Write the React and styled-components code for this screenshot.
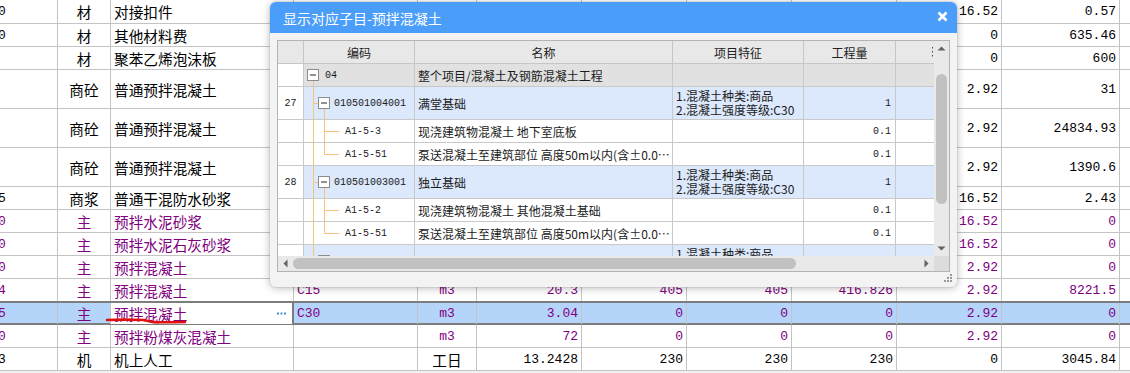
import React from 'react';
import styled, { createGlobalStyle, css } from 'styled-components';

const GlobalStyle = createGlobalStyle`
  html, body { margin: 0; padding: 0; background: #fff; overflow: hidden; }
  body { font-family: "Liberation Mono", "Noto Sans CJK SC", monospace; }
`;

const MIX = '"Liberation Mono", "Noto Sans CJK SC", monospace';
const CJK = '"Noto Sans CJK SC", sans-serif';
const PURPLE = '#800080';
const LINE = '#c4c4c4';
const ORANGE = '#f8c27c';

const COLS = '58px 53px 183px 124px 59px 105px 105px 105px 105px 105px 118px 1fr';

const Page = styled.div`
  position: relative;
  width: 1130px;
  height: 373px;
  overflow: hidden;
  background: #f0f0f0;
`;

const Sheet = styled.div`
  background: #fff;
`;

const Row = styled.div`
  display: grid;
  grid-template-columns: ${COLS};
  height: ${(p) => p.$h}px;
  box-sizing: border-box;
  border-bottom: 1px solid ${LINE};
  background: #fff;
  color: ${(p) => (p.$purple ? PURPLE : '#000')};
  ${(p) =>
    p.$selected &&
    css`
      background: #b4d4fa;
      border-top: 2px solid #7d7d7d;
      border-bottom: 2px solid #7d7d7d;
      margin-top: -1px;
    `}
`;

const Cell = styled.div`
  position: relative;
  box-sizing: border-box;
  border-right: ${(p) => (p.$edit ? '2px solid #7d7d7d' : `1px solid ${LINE}`)};
  display: flex;
  align-items: center;
  justify-content: ${(p) =>
    p.$align === 'right' ? 'flex-end' : p.$align === 'center' ? 'center' : p.$align === 'between' ? 'space-between' : 'flex-start'};
  padding: ${(p) => (p.$clip ? '0' : p.$align === 'between' ? '0 6px 0 3px' : '0 3px')};
  overflow: ${(p) => (p.$edit ? 'visible' : 'hidden')};
  white-space: nowrap;
  font-size: ${(p) => (p.$cjk ? '14.67px' : '13px')};
  font-family: ${(p) => (p.$cjk ? CJK : MIX)};
  background: ${(p) => (p.$edit ? '#fff' : 'transparent')};
  &:last-child { border-right: none; }
`;

const Clipped = styled.span`
  margin-left: -2px;
`;

const EditDots = styled.svg`
  flex: none;
  display: block;
`;

const Annotation = styled.svg`
  position: absolute;
  left: 104px;
  top: 315px;
  pointer-events: none;
`;

/* ---------------- Dialog ---------------- */

const Dialog = styled.div`
  position: absolute;
  left: 270px;
  top: 2px;
  width: 687px;
  height: 285px;
  box-sizing: border-box;
  background: #f3f3f3;
  border-radius: 6px;
  box-shadow: 0 1px 9px rgba(0, 0, 0, 0.28), 0 0 0 1px rgba(0, 0, 0, 0.06);
  display: flex;
  flex-direction: column;
  overflow: hidden;
`;

const TitleBar = styled.div`
  height: 31px;
  flex: none;
  background: #4a9df8;
  display: flex;
  align-items: center;
  justify-content: space-between;
  padding: 0 9px 0 13px;
  color: #fff;
  font-family: ${CJK};
  font-size: 14px;
`;

const CloseIcon = styled.svg`
  display: block;
  margin-top: -3px;
`;

const DialogBody = styled.div`
  position: relative;
  flex: 1;
  padding: 7px 7px 0 7px;
`;

const GridFrame = styled.div`
  width: 673px;
  height: 232px;
  box-sizing: border-box;
  border: 1px solid #b3b3b3;
  display: grid;
  grid-template-columns: 1fr 15px;
  grid-template-rows: 1fr 15px;
  background: #fff;
`;

const Viewport = styled.div`
  overflow: hidden;
  position: relative;
`;

const DCOLS = '26px 111px 258px 131px 92px 38px';

const DRow = styled.div`
  display: grid;
  grid-template-columns: ${DCOLS};
  height: ${(p) => p.$h}px;
`;

const DHead = styled.div`
  box-sizing: border-box;
  border-right: 1px solid #c6c6c6;
  border-bottom: 1px solid #c6c6c6;
  background: #e8e8e8;
  display: flex;
  align-items: center;
  justify-content: ${(p) => (p.$end ? 'flex-end' : 'center')};
  font-family: ${CJK};
  font-size: 12px;
  color: #222;
  &:last-child { border-right: none; }
`;

const DCell = styled.div`
  box-sizing: border-box;
  border-right: 1px solid #c9c9c9;
  border-bottom: 1px solid #c9c9c9;
  background: ${(p) => p.$bg || '#fff'};
  display: flex;
  align-items: ${(p) => (p.$tree ? 'stretch' : 'center')};
  justify-content: ${(p) => (p.$align === 'right' ? 'flex-end' : p.$align === 'center' ? 'center' : 'flex-start')};
  padding: ${(p) => (p.$tree ? '0' : p.$align === 'right' ? '0 4px 0 3px' : '0 3px')};
  overflow: hidden;
  white-space: nowrap;
  font-family: ${(p) => (p.$text ? CJK : MIX)};
  font-size: ${(p) => p.$fs || 12}px;
  color: #1b1b1b;
  &:last-child { border-right: none; }
`;

const CodeText = styled.span`
  align-self: center;
  font-size: 10px;
`;

const FeatureLines = styled.div`
  display: flex;
  flex-direction: column;
  font-family: ${CJK};
  font-size: 12px;
  line-height: 14px;
`;

const FeatureLine = styled.span`
  display: block;
  height: 14px;
`;

const TreeSvg = styled.svg`
  flex: none;
  display: block;
`;

const VScroll = styled.div`
  background: #e9e9e9;
  display: flex;
  flex-direction: column;
`;

const HScroll = styled.div`
  background: #e9e9e9;
  display: flex;
  flex-direction: row;
`;

const ArrowBox = styled.div`
  flex: none;
  width: 15px;
  height: 15px;
  display: flex;
  align-items: center;
  justify-content: center;
`;

const VTrack = styled.div`
  flex: 1;
  padding-top: 18px;
  display: flex;
  justify-content: center;
`;

const VThumb = styled.div`
  width: 11px;
  height: 130px;
  border-radius: 6px;
  background: #c1c1c1;
`;

const HTrack = styled.div`
  flex: 1;
  display: flex;
  align-items: center;
`;

const HThumb = styled.div`
  width: 503px;
  height: 11px;
  border-radius: 6px;
  background: #c1c1c1;
`;

const Corner = styled.div`
  background: #dcdcdc;
`;

const Grip = styled.svg`
  position: absolute;
  right: 4px;
  bottom: 4px;
  display: block;
`;

/* ---------------- Data ---------------- */

const bgRows = [
  { h: 24, c0: '0', type: '材', name: '对接扣件', price: '16.52', total: '0.57' },
  { h: 23, c0: '0', type: '材', name: '其他材料费', price: '0', total: '635.46' },
  { h: 23, c0: '', type: '材', name: '聚苯乙烯泡沫板', price: '0', total: '600' },
  { h: 39, type: '商砼', name: '普通预拌混凝土', price: '2.92', total: '31' },
  { h: 39, type: '商砼', name: '普通预拌混凝土', price: '2.92', total: '24834.93' },
  { h: 39, type: '商砼', name: '普通预拌混凝土', price: '2.92', total: '1390.6' },
  { h: 23, c0: '5', type: '商浆', name: '普通干混防水砂浆', price: '16.52', total: '2.43' },
  { h: 23, c0: '0', type: '主', name: '预拌水泥砂浆', price: '16.52', total: '0', purple: true },
  { h: 23, c0: '0', type: '主', name: '预拌水泥石灰砂浆', price: '16.52', total: '0', purple: true },
  { h: 23, c0: '0', type: '主', name: '预拌混凝土', price: '2.92', total: '0', purple: true },
  { h: 23, c0: '4', type: '主', name: '预拌混凝土', spec: 'C15', unit: 'm3', qty: '20.3', a: '405', b: '405', c: '416.826', price: '2.92', total: '8221.5', purple: true },
  { h: 24, c0: '5', type: '主', name: '预拌混凝土', spec: 'C30', unit: 'm3', qty: '3.04', a: '0', b: '0', c: '0', price: '2.92', total: '0', purple: true, selected: true },
  { h: 23, c0: '0', type: '主', name: '预拌粉煤灰混凝土', spec: '', unit: 'm3', qty: '72', a: '0', b: '0', c: '0', price: '2.92', total: '0', purple: true },
  { h: 23, c0: '3', type: '机', name: '机上人工', spec: '', unit: '工日', qty: '13.2428', a: '230', b: '230', c: '230', price: '0', total: '3045.84' },
];

const FEAT = ['1.混凝土种类:商品', '2.混凝土强度等级:C30'];
const BLUE_ROW = '#dce8fb';
const GREY_ROW = '#e1e1e1';

const dRows = [
  { kind: 'root', num: '', code: '04', name: '整个项目/混凝土及钢筋混凝土工程', h: 23, bg: GREY_ROW },
  { kind: 'parent', num: '27', code: '010501004001', name: '满堂基础', feat: FEAT, qty: '1', h: 33, bg: BLUE_ROW },
  { kind: 'child', code: 'A1-5-3', name: '现浇建筑物混凝土 地下室底板', qty: '0.1', h: 23 },
  { kind: 'last', code: 'A1-5-51', name: '泵送混凝土至建筑部位 高度50m以内(含±0.0…', qty: '0.1', h: 23 },
  { kind: 'parent', num: '28', code: '010501003001', name: '独立基础', feat: FEAT, qty: '1', h: 33, bg: BLUE_ROW },
  { kind: 'child', code: 'A1-5-2', name: '现浇建筑物混凝土 其他混凝土基础', qty: '0.1', h: 23 },
  { kind: 'last', code: 'A1-5-51', name: '泵送混凝土至建筑部位 高度50m以内(含±0.0…', qty: '0.1', h: 23 },
  { kind: 'parent', num: '29', code: '010501001001', name: '垫层', feat: FEAT, qty: '1', h: 33, bg: BLUE_ROW },
];

/* ---------------- Pieces ---------------- */

function ExpandBox({ x, y }) {
  return (
    <g>
      <rect x={x + 0.5} y={y + 0.5} width={11} height={11} fill="#fff" stroke="#8c8c8c" />
      <line x1={x + 3} y1={y + 6} x2={x + 9} y2={y + 6} stroke="#222" strokeWidth="1" />
    </g>
  );
}

function Tree({ kind, h }) {
  const ch = h - 1;
  const mid = Math.floor(ch / 2);
  if (kind === 'root') {
    return (
      <TreeSvg width={21} height={ch}>
        <line x1={9.5} y1={mid + 6} x2={9.5} y2={ch} stroke={ORANGE} />
        <ExpandBox x={3} y={mid - 6} />
      </TreeSvg>
    );
  }
  if (kind === 'parent') {
    return (
      <TreeSvg width={30} height={ch}>
        <line x1={9.5} y1={0} x2={9.5} y2={ch} stroke={ORANGE} />
        <line x1={9.5} y1={mid + 0.5} x2={14} y2={mid + 0.5} stroke={ORANGE} />
        <line x1={20.5} y1={mid + 6} x2={20.5} y2={ch} stroke={ORANGE} />
        <ExpandBox x={14} y={mid - 6} />
      </TreeSvg>
    );
  }
  const last = kind === 'last';
  return (
    <TreeSvg width={41} height={ch}>
      <line x1={9.5} y1={0} x2={9.5} y2={ch} stroke={ORANGE} />
      <line x1={20.5} y1={0} x2={20.5} y2={last ? mid + 0.5 : ch} stroke={ORANGE} />
      <line x1={20.5} y1={mid + 0.5} x2={35} y2={mid + 0.5} stroke={ORANGE} />
    </TreeSvg>
  );
}

function Triangle({ dir }) {
  const pts = {
    up: '0.5,4.5 4.5,0.5 8.5,4.5',
    down: '0.5,0.5 4.5,4.5 8.5,0.5',
    left: '4.5,0.5 0.5,4.5 4.5,8.5',
    right: '0.5,0.5 4.5,4.5 0.5,8.5',
  }[dir];
  const vertical = dir === 'up' || dir === 'down';
  return (
    <svg width={vertical ? 9 : 5} height={vertical ? 5 : 9}>
      <polygon points={pts} fill="#636363" />
    </svg>
  );
}

function MenuDots() {
  return (
    <svg width="3" height="12" style={{ display: 'block' }}>
      <rect x="1" y="1" width="1" height="1.5" fill="#444" />
      <rect x="1" y="5" width="1" height="1.5" fill="#444" />
      <rect x="1" y="9" width="1" height="1.5" fill="#444" />
    </svg>
  );
}

function BgRow({ r }) {
  const num = (v) => <Cell $align="right">{v || ''}</Cell>;
  return (
    <Row $h={r.h} $purple={r.purple} $selected={r.selected}>
      <Cell $clip>{r.c0 ? <Clipped>{r.c0}</Clipped> : null}</Cell>
      <Cell $cjk $align="center">{r.type}</Cell>
      {r.selected ? (
        <Cell $cjk $align="between" $edit>
          <span>{r.name}</span>
          <EditDots width="9" height="3">
            <rect x="0" y="0.5" width="2" height="2" fill="#4b8fd0" />
            <rect x="3.5" y="0.5" width="2" height="2" fill="#4b8fd0" />
            <rect x="7" y="0.5" width="2" height="2" fill="#4b8fd0" />
          </EditDots>
        </Cell>
      ) : (
        <Cell $cjk>{r.name}</Cell>
      )}
      <Cell>{r.spec || ''}</Cell>
      <Cell $cjk={r.unit === '工日'} $align="center">{r.unit || ''}</Cell>
      {num(r.qty)}
      {num(r.a)}
      {num(r.b)}
      {num(r.c)}
      {num(r.price)}
      {num(r.total)}
      <Cell />
    </Row>
  );
}

function DialogRow({ r }) {
  return (
    <DRow $h={r.h}>
      <DCell $align="center" $fs={10}>{r.num || ''}</DCell>
      <DCell $bg={r.bg} $tree>
        <Tree kind={r.kind} h={r.h} />
        <CodeText>{r.code}</CodeText>
      </DCell>
      <DCell $bg={r.bg} $text>{r.name}</DCell>
      <DCell $bg={r.bg}>
        {r.feat ? (
          <FeatureLines>
            {r.feat.map((l) => (
              <FeatureLine key={l}>{l}</FeatureLine>
            ))}
          </FeatureLines>
        ) : null}
      </DCell>
      <DCell $bg={r.bg} $align="right" $fs={10}>{r.qty || ''}</DCell>
      <DCell $bg={r.bg} />
    </DRow>
  );
}

export default function App() {
  return (
    <>
      <GlobalStyle />
      <Page>
        <Sheet>
          {bgRows.map((r, i) => (
            <BgRow key={i} r={r} />
          ))}
        </Sheet>

        <Annotation width="84" height="12">
          <path
            d="M3 5 Q20 4.2 40 5 L46 6.5 Q50 7.5 56 7.3 Q70 7.2 81 7"
            fill="none"
            stroke="#e01010"
            strokeWidth="2.6"
            strokeLinecap="round"
          />
        </Annotation>

        <Dialog>
          <TitleBar>
            <span>显示对应子目-预拌混凝土</span>
            <CloseIcon width="11" height="11">
              <line x1="1.5" y1="1.5" x2="9.5" y2="9.5" stroke="#fff" strokeWidth="2.6" />
              <line x1="9.5" y1="1.5" x2="1.5" y2="9.5" stroke="#fff" strokeWidth="2.6" />
            </CloseIcon>
          </TitleBar>
          <DialogBody>
            <GridFrame>
              <Viewport>
                <DRow $h={23}>
                  <DHead />
                  <DHead>编码</DHead>
                  <DHead>名称</DHead>
                  <DHead>项目特征</DHead>
                  <DHead>工程量</DHead>
                  <DHead $end>
                    <MenuDots />
                  </DHead>
                </DRow>
                {dRows.map((r, i) => (
                  <DialogRow key={i} r={r} />
                ))}
              </Viewport>
              <VScroll>
                <ArrowBox>
                  <Triangle dir="up" />
                </ArrowBox>
                <VTrack>
                  <VThumb />
                </VTrack>
                <ArrowBox>
                  <Triangle dir="down" />
                </ArrowBox>
              </VScroll>
              <HScroll>
                <ArrowBox>
                  <Triangle dir="left" />
                </ArrowBox>
                <HTrack>
                  <HThumb />
                </HTrack>
                <ArrowBox>
                  <Triangle dir="right" />
                </ArrowBox>
              </HScroll>
              <Corner />
            </GridFrame>
            <Grip width="9" height="9">
              <rect x="6" y="0" width="2" height="2" fill="#9a9a9a" />
              <rect x="3" y="3" width="2" height="2" fill="#9a9a9a" />
              <rect x="6" y="3" width="2" height="2" fill="#9a9a9a" />
              <rect x="0" y="6" width="2" height="2" fill="#9a9a9a" />
              <rect x="3" y="6" width="2" height="2" fill="#9a9a9a" />
              <rect x="6" y="6" width="2" height="2" fill="#9a9a9a" />
            </Grip>
          </DialogBody>
        </Dialog>
      </Page>
    </>
  );
}
